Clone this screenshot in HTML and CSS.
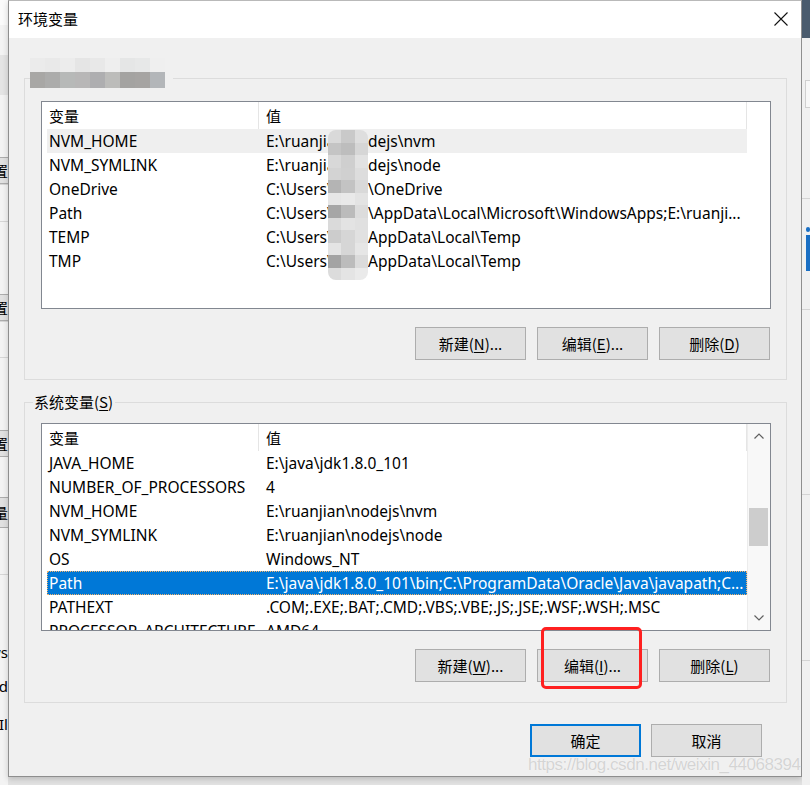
FILE: index.html
```html
<!DOCTYPE html>
<html>
  <head>
    <meta charset="utf-8">
    <title>环境变量</title>
    <link rel="stylesheet" href="styles.css">
  </head>
  <body>
    <div class="screen">
      <!-- 背后窗口的左边缘 -->
      <div class="side side-left">
        <div class="sl-white"></div>
        <div class="sl-blob"></div>
        <div class="sl-gap h62"></div>
        <div class="sl-btn"><span>设置</span></div>
        <div class="sl-line"></div>
        <div class="sl-gap h36"></div>
        <div class="sl-line"></div>
        <div class="sl-gap h72"></div>
        <div class="sl-btn"><span>设置</span></div>
        <div class="sl-line"></div>
        <div class="sl-gap h35"></div>
        <div class="sl-line"></div>
        <div class="sl-gap h72"></div>
        <div class="sl-btn"><span>设置</span></div>
        <div class="sl-gap h40"></div>
        <div class="sl-btn tall"><span>变量</span></div>
        <div class="sl-gap h46"></div>
        <div class="sl-line"></div>
        <div class="sl-gap h68"></div>
        <div class="sl-text"><span>Windows</span></div>
        <div class="sl-gap h16"></div>
        <div class="sl-text"><span>Grid</span></div>
        <div class="sl-gap h20"></div>
        <div class="sl-text"><span>Il</span></div>
      </div>

      <div class="dialog">
        <div class="titlebar">
          <span class="title">环境变量</span>
          <svg class="close" width="14" height="14" viewBox="0 0 14 14">
            <path d="M0.5 0.5 L13.5 13.5 M13.5 0.5 L0.5 13.5" stroke="#111" stroke-width="1.1" fill="none"/>
          </svg>
        </div>

        <div class="content">
          <fieldset class="group group-user">
            <legend class="legend-blur">
              <span class="mosaic light">
                <i style="background:#ebebeb"></i><i style="background:#e9e9e9"></i><i style="background:#ececec"></i><i style="background:#e5e5e5"></i><i style="background:#e8e8e8"></i><i style="background:#eeeeee"></i><i style="background:#e5e6e6"></i><i style="background:#e7e8e8"></i><i style="background:#efefef"></i>
              </span>
              <span class="mosaic dark">
                <i style="background:#a8a7a5"></i><i style="background:#acacab"></i><i style="background:#b7b9b8"></i><i style="background:#b8b7b7"></i><i style="background:#aeaeb0"></i><i style="background:#bcbcba"></i><i style="background:#a4a3a1"></i><i style="background:#a6a4a2"></i><i style="background:#b3b6b9"></i>
              </span>
            </legend>

            <div class="list">
              <div class="list-main">
                <div class="list-head">
                  <span class="c1">变量</span><span class="c2">值</span>
                </div>
                <div class="row hover"><span class="c1">NVM_HOME</span><span class="c2"><span class="pre">E:\ruanjia</span>dejs\nvm</span></div>
                <div class="row"><span class="c1">NVM_SYMLINK</span><span class="c2"><span class="pre">E:\ruanjia</span>dejs\node</span></div>
                <div class="row"><span class="c1">OneDrive</span><span class="c2"><span class="pre">C:\Users\</span>\OneDrive</span></div>
                <div class="row"><span class="c1">Path</span><span class="c2"><span class="pre">C:\Users\</span>\AppData\Local\Microsoft\WindowsApps;E:\ruanji...</span></div>
                <div class="row"><span class="c1">TEMP</span><span class="c2"><span class="pre">C:\Users\</span>AppData\Local\Temp</span></div>
                <div class="row"><span class="c1">TMP</span><span class="c2"><span class="pre">C:\Users\</span>AppData\Local\Temp</span></div>
              </div>
              <!-- 打码 -->
              <div class="mask">
                <i style="background:#d9d9d9"></i><i style="background:#c9c9c9"></i><i style="background:#dedede"></i>
                <i style="background:#c4c4c4"></i><i style="background:#bdbdbd"></i><i style="background:#d6d6d6"></i>
                <i style="background:#d8d8d8"></i><i style="background:#cfcfcf"></i><i style="background:#e2e2e2"></i>
                <i style="background:#d3d3d3"></i><i style="background:#d0d0d0"></i><i style="background:#dddddd"></i>
                <i style="background:#b4b4b4"></i><i style="background:#c3c3c3"></i><i style="background:#d9d9d9"></i>
                <i style="background:#e6e6e6"></i><i style="background:#e9e9e9"></i><i style="background:#e3e3e3"></i>
                <i style="background:#a6a6a6"></i><i style="background:#bbbbbb"></i><i style="background:#dcdcdc"></i>
                <i style="background:#dadada"></i><i style="background:#e3e3e3"></i><i style="background:#e0e0e0"></i>
                <i style="background:#cccccc"></i><i style="background:#d6d6d6"></i><i style="background:#e1e1e1"></i>
                <i style="background:#e4e4e4"></i><i style="background:#d6d6d6"></i><i style="background:#e6e6e6"></i>
                <i style="background:#a3a3a3"></i><i style="background:#bcbcbc"></i><i style="background:#dbdbdb"></i>
                <i style="background:#dcdcdc"></i><i style="background:#e4e4e4"></i><i style="background:#eaeaea"></i>
              </div>
            </div>

            <div class="btns">
              <button class="btn">新建(<u>N</u>)...</button>
              <button class="btn">编辑(<u>E</u>)...</button>
              <button class="btn">删除(<u>D</u>)</button>
            </div>
          </fieldset>

          <fieldset class="group group-sys">
            <legend class="legend-text">系统变量(<u>S</u>)</legend>

            <div class="list">
              <div class="list-main">
                <div class="list-head">
                  <span class="c1">变量</span><span class="c2">值</span>
                </div>
                <div class="row"><span class="c1">JAVA_HOME</span><span class="c2">E:\java\jdk1.8.0_101</span></div>
                <div class="row"><span class="c1">NUMBER_OF_PROCESSORS</span><span class="c2">4</span></div>
                <div class="row"><span class="c1">NVM_HOME</span><span class="c2">E:\ruanjian\nodejs\nvm</span></div>
                <div class="row"><span class="c1">NVM_SYMLINK</span><span class="c2">E:\ruanjian\nodejs\node</span></div>
                <div class="row"><span class="c1">OS</span><span class="c2">Windows_NT</span></div>
                <div class="row selected"><span class="c1">Path</span><span class="c2">E:\java\jdk1.8.0_101\bin;C:\ProgramData\Oracle\Java\javapath;C...</span></div>
                <div class="row"><span class="c1">PATHEXT</span><span class="c2">.COM;.EXE;.BAT;.CMD;.VBS;.VBE;.JS;.JSE;.WSF;.WSH;.MSC</span></div>
                <div class="row"><span class="c1">PROCESSOR_ARCHITECTURE</span><span class="c2">AMD64</span></div>
              </div>
              <div class="scrollbar">
                <div class="sb-arrow">
                  <svg width="10" height="6" viewBox="0 0 10 6"><path d="M0.5 5.5 L5 1 L9.5 5.5" stroke="#606060" stroke-width="1.2" fill="none"/></svg>
                </div>
                <div class="sb-track"><div class="sb-thumb"></div></div>
                <div class="sb-arrow">
                  <svg width="10" height="6" viewBox="0 0 10 6"><path d="M0.5 0.5 L5 5 L9.5 0.5" stroke="#606060" stroke-width="1.2" fill="none"/></svg>
                </div>
              </div>
            </div>

            <div class="btns">
              <button class="btn">新建(<u>W</u>)...</button>
              <button class="btn">编辑(<u>I</u>)...</button>
              <button class="btn">删除(<u>L</u>)</button>
            </div>
          </fieldset>

          <div class="footer">
            <button class="btn primary">确定</button>
            <button class="btn">取消</button>
          </div>
        </div>
      </div>

      <!-- 背后窗口的右边缘 -->
      <div class="side side-right">
        <div class="sr-dark"></div>
        <div class="sr-gap h42"></div>
        <div class="sr-box"></div>
        <div class="sr-gap h90"></div>
        <div class="sr-line"></div>
        <div class="sr-gap h28"></div>
        <div class="sr-i"><span class="dot"></span><span class="stem"></span></div>
        <div class="sr-gap h38"></div>
        <div class="sr-line"></div>
        <div class="sr-gap h184"></div>
        <div class="sr-line"></div>
        <div class="sr-gap h165"></div>
        <div class="sr-line"></div>
      </div>

      <!-- 红框标注 -->
      <div class="annot"></div>
      <div class="watermark">https://blog.csdn.net/weixin_44068394</div>
    </div>
  </body>
</html>
```

FILE: styles.css
```css
*{
  margin: 0;
  padding: 0;
  box-sizing: border-box;
}
body{
  background: #e4e4e4;
  font-family: "Noto Sans", "Noto Sans CJK SC", sans-serif;
  font-size: 15px;
  color: #000;
}
.screen{
  position: relative;
  display: flex;
  width: 810px;
  height: 785px;
  overflow: hidden;
  background: #e2e2e2;
}

/* 左右两侧露出来的其它窗口 */
.side{
  display: flex;
  flex-direction: column;
  overflow: hidden;
  background: #f3f3f3;
}
.side-left{
  width: 8px;
  align-items: flex-end;
}
.sl-white{
  width: 8px;
  height: 25px;
  background: #fbfbfb;
  flex: none;
}
.sl-blob{
  width: 8px;
  height: 40px;
  margin-top: 30px;
  background: #e4e4e4;
  flex: none;
}
.sl-gap{ flex: none; }
.h16{ height: 16px; }
.h20{ height: 20px; }
.h35{ height: 35px; }
.h36{ height: 36px; }
.h40{ height: 40px; }
.h46{ height: 46px; }
.h62{ height: 62px; }
.h68{ height: 68px; }
.h72{ height: 72px; }
.sl-btn{
  flex: none;
  height: 27px;
  width: 8px;
  display: flex;
  justify-content: flex-end;
  align-items: center;
  background: #e1e1e1;
  border-top: 1px solid #adadad;
  border-bottom: 1px solid #adadad;
  overflow: hidden;
  font-family: "Noto Sans CJK SC", sans-serif;
  font-size: 15px;
}
.sl-btn.tall{ height: 31px; }
.sl-btn span, .sl-text span{
  white-space: nowrap;
  flex: none;
}
.sl-line{
  flex: none;
  width: 8px;
  height: 1px;
  background: #d6d6d6;
}
.sl-text{
  flex: none;
  width: 8px;
  height: 18px;
  display: flex;
  justify-content: flex-end;
  align-items: center;
  overflow: hidden;
  font-size: 15px;
}

.side-right{
  width: 8px;
  background: #f0f0f0;
}
.sr-dark{
  flex: none;
  height: 38px;
  background: #4a5b6d;
}
.sr-gap{ flex: none; }
.h28{ height: 28px; }
.h38{ height: 38px; }
.h42{ height: 42px; }
.h90{ height: 90px; }
.h165{ height: 165px; }
.h184{ height: 184px; }
.sr-box{
  flex: none;
  height: 28px;
  margin-left: 3px;
  border: 1px solid #cfcfcf;
  border-right: none;
  background: #f7f7f7;
}
.sr-line{
  flex: none;
  height: 1px;
  background: #d4d4d4;
}
.sr-i{
  flex: none;
  display: flex;
  flex-direction: column;
  padding-left: 4px;
  gap: 3px;
}
.sr-i .dot{
  width: 4px;
  height: 5px;
  background: #1a6fc4;
  border-radius: 2px;
}
.sr-i .stem{
  width: 4px;
  height: 36px;
  background: #1a6fc4;
}

/* 对话框 */
.dialog{
  flex: none;
  width: 794px;
  height: 777px;
  background: #f0f0f0;
  border: 1px solid #8e8e8e;
  border-top-color: #b9b9b9;
  box-shadow: 0 2px 6px rgba(0,0,0,.18);
  display: flex;
  flex-direction: column;
}
.titlebar{
  height: 37px;
  background: #fff;
  display: flex;
  align-items: center;
  justify-content: space-between;
  padding: 0 13px 0 9px;
  flex: none;
}
.title{
  font-family: "Noto Sans CJK SC", sans-serif;
  font-size: 15px;
  line-height: 20px;
  margin-top: -1px;
}
.close{
  display: block;
  margin-top: -2px;
}
.content{
  display: flex;
  flex-direction: column;
  padding: 0 14px 0 15px;
}

/* 分组框 */
.group{
  border: 1px solid #dcdcdc;
  padding: 0 15px 0 16px;
  min-width: 0;
}
.group-user{
  margin-top: 20px;
  padding-top: 3px;
  padding-bottom: 19px;
}
.group-sys{
  margin-top: 12px;
  padding-top: 11px;
  padding-bottom: 20px;
}
.legend-blur{
  margin-left: -11px;
  height: 40px;
  padding-right: 8px;
  display: flex;
  flex-direction: column;
}
.mosaic{
  display: flex;
}
.mosaic i{
  display: block;
  width: 15px;
}
.mosaic.light i{ height: 14px; }
.mosaic.dark i{ height: 16px; }
.legend-text{
  margin-left: -8px;
  padding: 0 2px 0 1px;
  font-family: "Noto Sans CJK SC", sans-serif;
  font-size: 15px;
  line-height: 20px;
}
u{
  text-decoration: underline;
  text-underline-offset: 2px;
}

/* 列表 */
.list{
  position: relative;
  height: 208px;
  background: #fff;
  border: 1px solid #828790;
  display: flex;
  overflow: hidden;
}
.list-main{
  width: 705px;
  flex: none;
  padding-left: 5px;
}
.list-head{
  height: 27px;
  display: flex;
  align-items: center;
  width: 700px;
  border-right: 1px solid #e5e5e5;
}
.list-head .c1{
  height: 27px;
  display: flex;
  align-items: center;
  border-right: 1px solid #e5e5e5;
  font-family: "Noto Sans CJK SC", sans-serif;
}
.list-head .c2{
  font-family: "Noto Sans CJK SC", sans-serif;
}
.c1{
  width: 212px;
  padding-left: 2px;
  flex: none;
  white-space: nowrap;
  overflow: hidden;
}
.c2{
  padding-left: 7px;
  flex: 1;
  white-space: nowrap;
  overflow: hidden;
}
.row{
  height: 24px;
  width: 700px;
  display: flex;
  align-items: center;
  line-height: 24px;
  font-size: 15.5px;
}
.row.hover{
  background: #efefef;
}
.row.selected{
  background: #0078d7;
  color: #fff;
  outline: 1px dotted #f4b36b;
  outline-offset: -1px;
}
.pre{
  display: inline-block;
  width: 102px;
  overflow: hidden;
  vertical-align: top;
}
.mask{
  position: absolute;
  left: 286px;
  top: 28px;
  width: 40px;
  display: grid;
  grid-template-columns: repeat(3, 1fr);
  grid-auto-rows: 12.5px;
  border-radius: 8px;
  overflow: hidden;
}
.mask i{ display: block; }

/* 滚动条 */
.scrollbar{
  flex: none;
  width: 23px;
  display: flex;
  flex-direction: column;
  background: #f8f8f8;
  border-left: 1px solid #ececec;
}
.sb-arrow{
  height: 24px;
  display: flex;
  align-items: center;
  justify-content: center;
  flex: none;
}
.sb-track{
  flex: 1;
  padding: 60px 2px 0 1px;
}
.sb-thumb{
  height: 38px;
  background: #cdcdcd;
}

/* 按钮 */
.btns{
  display: flex;
  justify-content: flex-end;
  gap: 11px;
  margin-top: 18px;
  padding-right: 1px;
}
.btn{
  width: 111px;
  height: 33px;
  background: #e1e1e1;
  border: 1px solid #adadad;
  font-family: "Noto Sans CJK SC", sans-serif;
  font-size: 15px;
  color: #000;
}
.btn.primary{
  border: 2px solid #0078d7;
}
.footer{
  display: flex;
  justify-content: flex-end;
  gap: 10px;
  margin-top: 21px;
  padding-right: 25px;
}

/* 标注和水印 */
.annot{
  position: absolute;
  left: 541px;
  top: 627px;
  width: 101px;
  height: 62px;
  border: 3px solid #ff2020;
  border-radius: 5px;
}
.watermark{
  position: absolute;
  left: 528px;
  top: 755px;
  font-family: "Liberation Sans", sans-serif;
  font-size: 17px;
  letter-spacing: -0.45px;
  color: rgba(195,195,195,.7);
  text-shadow: 0 0 1px rgba(255,255,255,.9);
  white-space: nowrap;
}
```
